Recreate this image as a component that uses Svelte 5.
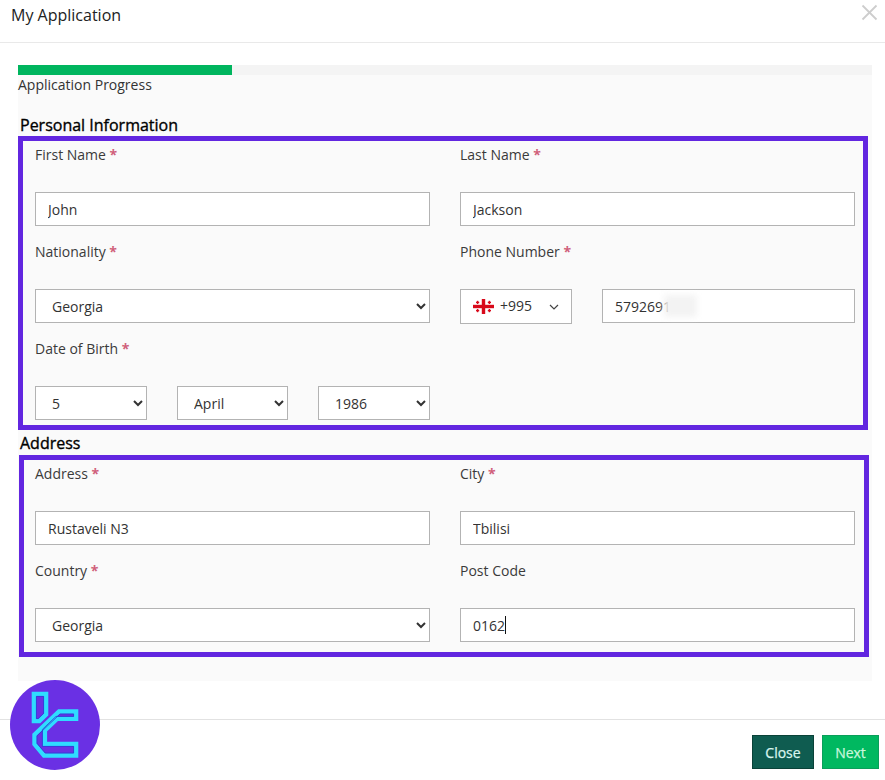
<script>
  let countries = ['Georgia', 'Armenia', 'Turkey'];
</script>

<div class="modal">
  <header class="modal-head">
    <h1>My Application</h1>
    <button type="button" class="close-x" aria-label="Close">
      <svg width="17" height="17" viewBox="0 0 17 17" fill="none" stroke="#cdcdcd" stroke-width="1.8">
        <line x1="1.5" y1="1.5" x2="15.5" y2="15.5"/>
        <line x1="15.5" y1="1.5" x2="1.5" y2="15.5"/>
      </svg>
    </button>
  </header>

  <main class="modal-body">
    <div class="panel">
      <div class="progress"><div class="progress-fill"></div></div>
      <div class="progress-label">Application Progress</div>

      <h2 class="first">Personal Information</h2>
      <section class="box">
        <div class="field">
          <label for="first">First Name <b>*</b></label>
          <input id="first" value="John" />
        </div>
        <div class="field">
          <label for="last">Last Name <b>*</b></label>
          <input id="last" value="Jackson" />
        </div>
        <div class="field">
          <label for="nat">Nationality <b>*</b></label>
          <select id="nat">
            {#each countries as c}<option>{c}</option>{/each}
          </select>
        </div>
        <div class="field">
          <label for="phone">Phone Number <b>*</b></label>
          <div class="phone">
            <button type="button" class="dial">
              <svg class="flag" width="21" height="15" viewBox="0 0 21 15">
                <rect width="21" height="15" fill="#fff"/>
                <rect x="8.8" width="3.4" height="15" fill="#d8091a"/>
                <rect y="5.8" width="21" height="3.4" fill="#d8091a"/>
                <g fill="#d8091a">
                  <rect x="3.9" y="1.8" width="1.4" height="3.2"/><rect x="3" y="2.7" width="3.2" height="1.4"/>
                  <rect x="15.7" y="1.8" width="1.4" height="3.2"/><rect x="14.8" y="2.7" width="3.2" height="1.4"/>
                  <rect x="3.9" y="10" width="1.4" height="3.2"/><rect x="3" y="10.9" width="3.2" height="1.4"/>
                  <rect x="15.7" y="10" width="1.4" height="3.2"/><rect x="14.8" y="10.9" width="3.2" height="1.4"/>
                </g>
              </svg>
              <span>+995</span>
              <svg class="chev" width="10" height="6" viewBox="0 0 10 6" fill="none" stroke="#444" stroke-width="1.2">
                <path d="M1 1l4 4 4-4"/>
              </svg>
            </button>
            <div class="phone-num">
              <input id="phone" value="5792691" />
              <span class="blur-patch"></span>
            </div>
          </div>
        </div>
        <div class="field">
          <label for="day">Date of Birth <b>*</b></label>
          <div class="dob">
            <select id="day"><option>5</option></select>
            <select aria-label="Month"><option>April</option></select>
            <select aria-label="Year"><option>1986</option></select>
          </div>
        </div>
      </section>

      <h2>Address</h2>
      <section class="box box-address">
        <div class="field">
          <label for="addr">Address <b>*</b></label>
          <input id="addr" value="Rustaveli N3" />
        </div>
        <div class="field">
          <label for="city">City <b>*</b></label>
          <input id="city" value="Tbilisi" />
        </div>
        <div class="field">
          <label for="country">Country <b>*</b></label>
          <select id="country">
            {#each countries as c}<option>{c}</option>{/each}
          </select>
        </div>
        <div class="field">
          <label for="post">Post Code</label>
          <div class="post">
            <input id="post" value="0162" />
            <span class="caret"></span>
          </div>
        </div>
      </section>
    </div>
  </main>

  <footer class="modal-foot">
    <button type="button" class="btn btn-close">Close</button>
    <button type="button" class="btn btn-next">Next</button>
  </footer>

  <svg class="logo" width="90" height="90" viewBox="0 0 90 90" fill="none">
    <circle cx="45" cy="45" r="45" fill="#6a30e4"/>
    <g stroke="#2fdcff" stroke-width="4.4" stroke-linejoin="miter">
      <path d="M23.9 13.9H36.1V34.5L29.3 41.1H23.9Z"/>
      <path d="M49 31.5H66.1V38.9H47L34.9 50.4V63.9H66.1V75.5H34L24.5 64.3V54.7Z"/>
    </g>
    <g stroke="#2a3fd4" stroke-width="0.8">
      <path d="M26.4 16.4H33.6V33.4L28.2 38.6H26.4Z"/>
      <path d="M50 34H63.6V36.4H46L32.4 49.4V66.4H63.6V73H35.2L27 63.3V55.8Z"/>
    </g>
  </svg>
</div>

<style>
  :global(body) {
    background: #fff;
  }

  .modal {
    position: relative;
    width: 885px;
    height: 780px;
    background: #fff;
    font-family: "Open Sans", sans-serif;
    font-size: 14px;
    color: #333;
    overflow: hidden;
    display: flex;
    flex-direction: column;
  }

  .modal-head {
    height: 43px;
    flex: none;
    box-sizing: border-box;
    border-bottom: 1px solid #e9e9e9;
    padding: 4px 7px 0 11px;
    display: flex;
    justify-content: space-between;
    align-items: flex-start;
  }

  .modal-head h1 {
    margin: 0;
    font-size: 16px;
    font-weight: 400;
    line-height: 22px;
    color: #222;
  }

  .close-x {
    background: none;
    border: none;
    padding: 0;
    display: flex;
  }

  .modal-body {
    height: 676px;
    flex: none;
    padding: 22px 13px 0 18px;
    box-sizing: border-box;
  }

  .panel {
    height: 616px;
    background: #fafafa;
  }

  .progress {
    height: 10px;
    background: #f4f4f4;
  }

  .progress-fill {
    width: 214px;
    height: 100%;
    background: #00b55e;
  }

  .progress-label {
    line-height: 20px;
    height: 20px;
  }

  h2 {
    margin: 3px 0 0 2px;
    height: 22px;
    font-size: 16px;
    font-weight: 500;
    line-height: 21px;
    color: #000;
    -webkit-text-stroke: 0.35px #000;
  }

  h2.first {
    margin-top: 19px;
    line-height: 23px;
  }

  .box {
    width: 850px;
    box-sizing: border-box;
    border: 5px solid #6226e0;
    padding: 4px 8px 5px 12px;
    display: grid;
    grid-template-columns: 395px 395px;
    column-gap: 30px;
    row-gap: 16px;
  }

  .box-address {
    margin-left: 1px;
    margin-top: 0;
    padding-left: 11px;
    padding-bottom: 10px;
  }

  .field label {
    display: block;
    height: 20px;
    line-height: 20px;
    margin-bottom: 27px;
    color: #3a3a3a;
  }

  .field label b {
    color: #d0607a;
    font-weight: 700;
  }

  input,
  select {
    width: 100%;
    height: 34px;
    box-sizing: border-box;
    border: 1px solid #b3b3b3;
    border-radius: 0;
    background: #fff;
    font-family: inherit;
    font-size: 14px;
    color: #333;
    outline: none;
  }

  input {
    padding: 0 12px;
  }

  select {
    padding: 0 0 0 12px;
  }

  .phone {
    height: 34px;
    display: flex;
    gap: 30px;
  }

  .dial {
    width: 112px;
    height: 35px;
    flex: none;
    box-sizing: border-box;
    border: 1px solid #b3b3b3;
    background: #fff;
    padding: 0 12px;
    display: flex;
    align-items: center;
    font-family: inherit;
    font-size: 14px;
    color: #333;
  }

  .flag {
    flex: none;
    margin-right: 6px;
  }

  .dial span {
    position: relative;
    top: -1px;
  }

  .chev {
    margin-left: auto;
  }

  .phone-num {
    position: relative;
    flex: 1;
  }

  .blur-patch {
    position: absolute;
    left: 62px;
    top: 6px;
    width: 33px;
    height: 22px;
    background: #f3f3f3;
    filter: blur(3px);
  }

  .dob {
    display: grid;
    grid-template-columns: 112px 111px 112px;
    column-gap: 30px;
  }

  .post {
    position: relative;
  }

  .caret {
    position: absolute;
    left: 45px;
    top: 8px;
    width: 1px;
    height: 18px;
    background: #111;
  }

  .modal-foot {
    flex: 1;
    border-top: 1px solid #e2e2e2;
    padding: 15px 6px 0 0;
    display: flex;
    justify-content: flex-end;
    align-items: flex-start;
    gap: 8px;
  }

  .btn {
    height: 34px;
    border: 1px solid;
    border-radius: 0;
    padding: 0;
    font-family: inherit;
    font-size: 14px;
    font-weight: 500;
    -webkit-text-stroke: 0.25px currentColor;
  }

  .btn-close {
    width: 62px;
    background: #0f5c50;
    border-color: #0a4238;
    color: #d9f5ee;
  }

  .btn-next {
    width: 57px;
    background: #00b860;
    border-color: #0a9e5a;
    color: #c8f7dc;
  }

  .logo {
    position: absolute;
    left: 10px;
    top: 680px;
  }
</style>
